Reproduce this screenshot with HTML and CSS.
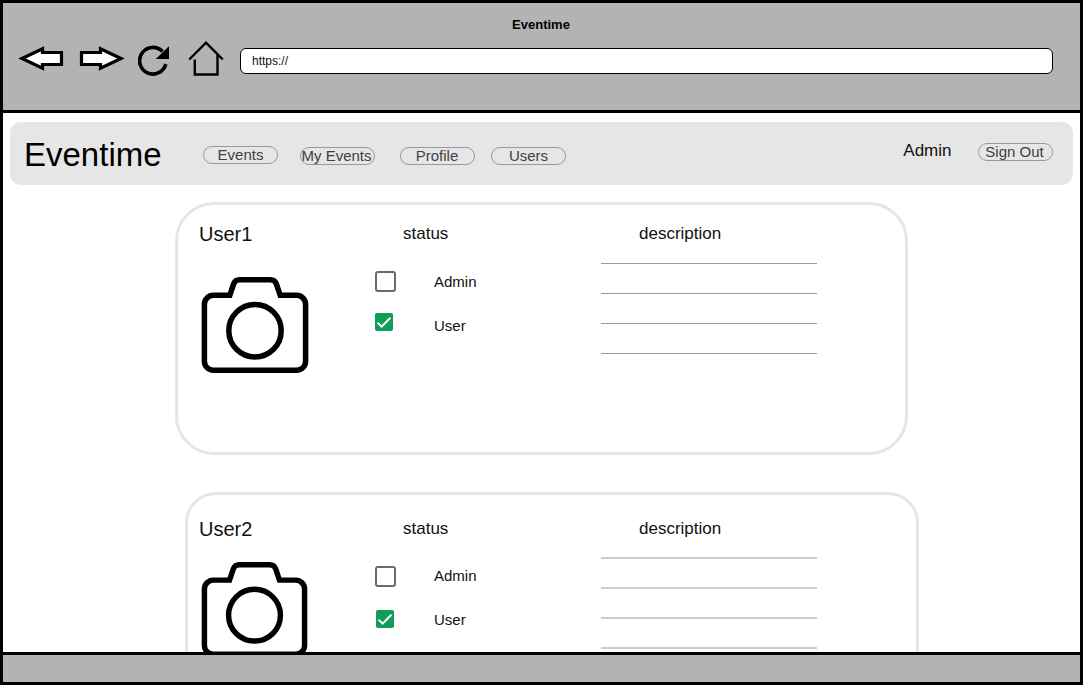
FILE: index.html
```html
<!DOCTYPE html>
<html lang="en">
<head>
<meta charset="utf-8">
<title>Eventime</title>
<link rel="stylesheet" href="styles.css">
</head>
<body>
<svg class="sprite" aria-hidden="true">
  <symbol id="camera" viewBox="0 0 108 98">
    <path d="M12.400 19.300H28.800L32.600 8A6.400 6.400 0 0 1 38.600 3.700H69.400A6.400 6.400 0 0 1 75.400 8L79.200 19.300H95.600A9 9 0 0 1 104.600 28.300V85.300A9 9 0 0 1 95.600 94.300H12.400A9 9 0 0 1 3.400 85.300V28.300A9 9 0 0 1 12.400 19.300Z" fill="none" stroke="#000" stroke-width="5.500"/>
    <circle cx="54" cy="54.700" r="26.200" fill="none" stroke="#000" stroke-width="5.500"/>
  </symbol>
  <symbol id="tick" viewBox="0 0 18 18">
    <path d="M2.600 9.600 6.600 13.600 15.400 4.800" fill="none" stroke="#fff" stroke-width="2"/>
  </symbol>
</svg>
<div class="window">
  <header class="chrome">
    <div class="chrome-title">Eventime</div>
    <div class="toolbar">
      <svg class="arrow" viewBox="0 0 46 26"><path d="M4 12.500 24.500 2.800V6.500H43.500V18.500H24.500V22.200Z" fill="#fff" stroke="#000" stroke-width="3.200"/></svg>
      <svg class="arrow forward" viewBox="0 0 46 26"><path d="M42 12.500 21.500 2.800V6.500H2.500V18.500H21.500V22.200Z" fill="#fff" stroke="#000" stroke-width="3.200"/></svg>
      <svg class="reload" viewBox="0 0 32 32"><path d="M24.500 6.500A13.300 13.300 0 1 0 27.800 19" fill="none" stroke="#000" stroke-width="3.600"/><path d="M31 1.300V14H17.800Z"/></svg>
      <svg class="home" viewBox="0 0 36 37"><path d="M1.200 18.500 18 1.700 34.800 18.500M6.800 18.500V33.500H29.500V14" fill="none" stroke="#000" stroke-width="2.400"/></svg>
      <div class="url">https://</div>
    </div>
  </header>
  <main class="page">
    <nav class="navbar">
      <div class="brand">Eventime</div>
      <a class="pill events">Events</a>
      <a class="pill my-events">My Events</a>
      <a class="pill profile">Profile</a>
      <a class="pill users">Users</a>
      <span class="account">Admin</span>
      <a class="pill sign-out">Sign Out</a>
    </nav>
    <section class="card first">
      <div class="person">
        <h2 class="name">User1</h2>
        <svg class="camera"><use href="#camera"/></svg>
      </div>
      <div class="status">
        <h3 class="heading">status</h3>
        <div class="option"><span class="box"></span><span class="label">Admin</span></div>
        <div class="option chosen"><svg class="checked"><use href="#tick"/></svg><span class="label">User</span></div>
      </div>
      <div class="description">
        <h3 class="heading">description</h3>
        <div class="rules"><i></i><i></i><i></i><i></i></div>
      </div>
    </section>
    <section class="card second">
      <div class="person">
        <h2 class="name">User2</h2>
        <svg class="camera"><use href="#camera"/></svg>
      </div>
      <div class="status">
        <h3 class="heading">status</h3>
        <div class="option"><span class="box"></span><span class="label">Admin</span></div>
        <div class="option chosen"><svg class="checked"><use href="#tick"/></svg><span class="label">User</span></div>
      </div>
      <div class="description">
        <h3 class="heading">description</h3>
        <div class="rules"><i></i><i></i><i></i><i></i></div>
      </div>
    </section>
  </main>
  <footer class="bottom-bar"></footer>
</div>
</body>
</html>
```

FILE: styles.css
```css
* { box-sizing: border-box; }
body { margin: 0; font-family: "Liberation Sans", Arial, sans-serif; color: #111; }
svg { display: block; flex: none; }
.sprite { display: none; }

.window { display: flex; flex-direction: column; width: 1083px; height: 685px; border: 3px solid #000; overflow: hidden; background: #fff; }

.chrome { height: 110px; flex: none; padding-top: 13px; background: #b3b3b3; border-bottom: 3px solid #000; }
.chrome-title { height: 18px; padding-right: 1px; line-height: 18px; text-align: center; font-size: 13px; font-weight: bold; color: #000; }
.toolbar { display: flex; align-items: flex-start; margin-top: 6px; padding: 0 27px 0 15px; }
.arrow { width: 46px; height: 26px; margin-top: 6px; }
.forward { margin-left: 15px; }
.reload { width: 32px; height: 32px; margin: 5px 0 0 13px; }
.home { width: 36px; height: 37px; margin: 1px 0 0 18px; }
.url { flex: 1; height: 26px; margin: 8px 0 0 16px; padding-left: 11px; border: 1px solid #000; border-radius: 6px; background: #fff; font-size: 12px; line-height: 24px; }

.page { flex: 1; min-height: 0; padding: 9px 7px 0; overflow: hidden; }
.navbar { display: flex; align-items: flex-start; height: 63px; padding: 0 20px 0 14px; border-radius: 11px; background: #e6e6e6; }
.brand { width: 179px; margin-top: 13px; font-size: 33px; line-height: 40px; color: #000; }
.pill { width: 75px; height: 18px; border: 1px solid #999; border-radius: 9px; font-size: 15px; line-height: 16px; color: #404040; white-space: nowrap; text-align: center; }
.events { margin-top: 24px; }
.my-events { margin: 25px 1px 0 22px; padding-right: 2px; }
.profile { margin: 25px 0 0 24px; padding-right: 1px; }
.users { margin: 25px 0 0 16px; }
.account { margin: 19px 26.500px 0 auto; font-size: 17px; line-height: 20px; }
.sign-out { margin-top: 21px; padding-right: 2px; }

.card { display: flex; border: 3px solid #e6e6e6; }
.first { width: 733px; height: 253px; margin: 17px 0 0 165px; padding-left: 21px; border-radius: 39px; }
.second { width: 734px; height: 253px; margin: 37px 0 0 175px; padding-left: 11px; border-radius: 31px; }
.name { margin: 17px 0 0; font-size: 20px; line-height: 24px; font-weight: normal; }
.second .name { margin-top: 22px; }
.person { width: 176px; flex: none; }
.camera { width: 108px; height: 98px; margin: 30px 0 0 2px; }
.second .camera { width: 107px; height: 97px; margin: 20px 0 0 2.400px; }

.status { width: 226px; flex: none; }
.heading { margin: 19px 0 0 28px; font-size: 17px; line-height: 20px; font-weight: normal; }
.second .heading { margin-top: 24px; }
.option { display: flex; align-items: flex-start; gap: 38px; height: 20px; margin-top: 27px; font-size: 15px; line-height: 20px; }
.label { margin-top: 1px; }
.box { width: 21px; height: 21px; border: 2px solid #6b6b6b; border-radius: 3px; }
.option.chosen { gap: 41px; margin-top: 22px; }
.chosen .label { margin-top: 3px; }
.second .label { margin-top: 0; }
.second .option.chosen { gap: 40px; margin: 24px 0 0 1px; }
.checked { width: 18px; height: 18px; border-radius: 2px; background: #0f9d58; }

.description { width: 216px; flex: none; }
.description .heading { margin-left: 38px; }
.rules { display: grid; gap: 29px; margin-top: 19px; }
.rules i { height: 1px; background: #999; }
.second .rules { gap: 28px; margin-top: 18px; }
.second .rules i { height: 2px; background: #ccc; }

.bottom-bar { flex: none; height: 30px; border-top: 3px solid #000; background: #b3b3b3; }
```
